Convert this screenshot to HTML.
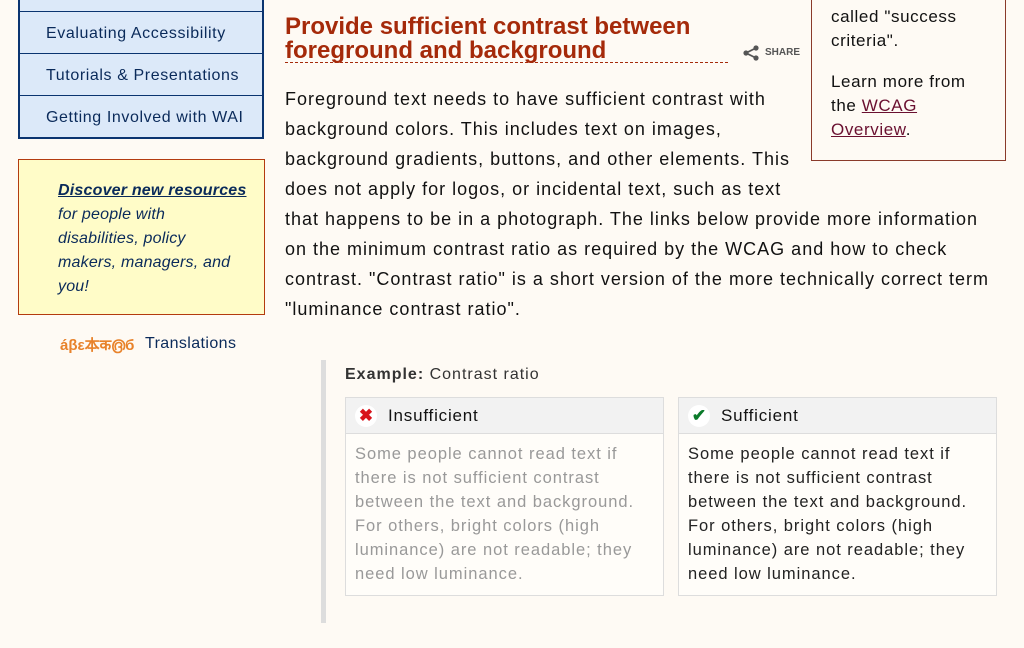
<!DOCTYPE html>
<html><head><meta charset="utf-8"><style>
body{margin:0;width:1024px;height:648px;background:#fefaf4;font-family:"Liberation Sans",sans-serif;overflow:hidden;position:relative;color:#111}
.a{position:absolute;white-space:nowrap}
.nav{position:absolute;left:18px;top:-4px;width:242px;border:2px solid #0a3470;border-top:none;background:#dce9f9}
.nav div{height:41px;border-top:1px solid #0a3470;font-size:16px;color:#0a2a5a;line-height:43px;padding-left:26px;letter-spacing:0.6px}
.promo{position:absolute;left:18px;top:159px;width:245px;height:154px;border:1px solid #b33b0f;background:#fffcc8}
.promo p{margin:0;position:absolute;left:39px;top:19px;font-size:16px;line-height:24px;font-style:italic;color:#0a2a5a;letter-spacing:0.2px}
h1{position:absolute;left:285px;top:15px;margin:0;font-size:24px;line-height:24px;color:#a52a0a;font-weight:bold}
.body{font-size:18px;line-height:30px;letter-spacing:1px}
.side{position:absolute;left:811px;top:-2px;width:193px;height:162px;border:1px solid #8a3a2a;border-top:none}
.side p{margin:0;position:absolute;left:19px;font-size:17px;line-height:24px;letter-spacing:0.6px}
.ex{position:absolute;left:321px;top:360px;width:5px;height:263px;background:#ddd}
.card{position:absolute;top:397px;width:317px;height:197px;border:1px solid #ddd;background:#fffdf9}
.card .hd{height:35px;background:#f2f2f2;border-bottom:1px solid #ddd;font-size:17px;line-height:36px;padding-left:42px;position:relative;letter-spacing:0.8px}
.card .ic{position:absolute;left:9px;top:7px;width:22px;height:22px;border-radius:50%;background:#fff;text-align:center;line-height:22px;font-weight:bold;font-size:17px;letter-spacing:0}
.card .bd{padding:8px 9px;font-size:16.5px;line-height:24px;white-space:nowrap;letter-spacing:0.95px}
</style></head><body>
<div class="nav"><div style="height:14px"></div><div>Evaluating Accessibility</div><div>Tutorials &amp; Presentations</div><div>Getting Involved with WAI</div></div>
<div class="promo"><p><b style="text-decoration:underline">Discover new resources</b><br>for people with<br>disabilities, policy<br>makers, managers, and<br>you!</p></div>
<div class="a" style="left:60px;top:334px;font-size:15px;color:#e8822a;font-weight:bold">áβε本क൫б</div>
<div class="a" style="left:145px;top:335px;font-size:16px;color:#0a2a5a;letter-spacing:0.4px">Translations</div>
<h1>Provide sufficient contrast between<br><span style="border-bottom:1px dashed #a52a0a;display:inline-block;width:443px;line-height:23px">foreground and background</span></h1>
<svg class="a" style="left:742px;top:45px" width="18" height="16" viewBox="0 0 18 16"><circle cx="14" cy="3" r="2.6" fill="#555"/><circle cx="4" cy="8" r="2.6" fill="#555"/><circle cx="14" cy="13" r="2.6" fill="#555"/><path d="M14 3L4 8L14 13" stroke="#555" stroke-width="1.8" fill="none"/></svg>
<div class="a" style="left:765px;top:47px;font-size:10px;color:#555;font-weight:bold">SHARE</div>
<div class="a body" style="left:285px;top:84px">Foreground text needs to have sufficient contrast with<br>background colors. This includes text on images,<br>background gradients, buttons, and other elements. This<br>does not apply for logos, or incidental text, such as text<br>that happens to be in a photograph. The links below provide more information<br>on the minimum contrast ratio as required by the WCAG and how to check<br>contrast. "Contrast ratio" is a short version of the more technically correct term<br>"luminance contrast ratio".</div>
<div class="side"><p style="top:7px">called "success<br>criteria".</p><p style="top:72px">Learn more from<br>the <u style="color:#6a1030">WCAG</u><br><u style="color:#6a1030">Overview</u>.</p></div>
<div class="ex"></div>
<div class="a" style="left:345px;top:366px;font-size:16px;color:#333;letter-spacing:1px"><b>Example:</b> Contrast ratio</div>
<div class="card" style="left:345px"><div class="hd"><span class="ic" style="color:#d8141c">✖</span>Insufficient</div><div class="bd" style="color:#999">Some people cannot read text if<br>there is not sufficient contrast<br>between the text and background.<br>For others, bright colors (high<br>luminance) are not readable; they<br>need low luminance.</div></div>
<div class="card" style="left:678px"><div class="hd"><span class="ic" style="color:#0a7a2a">✔</span>Sufficient</div><div class="bd" style="color:#222">Some people cannot read text if<br>there is not sufficient contrast<br>between the text and background.<br>For others, bright colors (high<br>luminance) are not readable; they<br>need low luminance.</div></div>
</body></html>
